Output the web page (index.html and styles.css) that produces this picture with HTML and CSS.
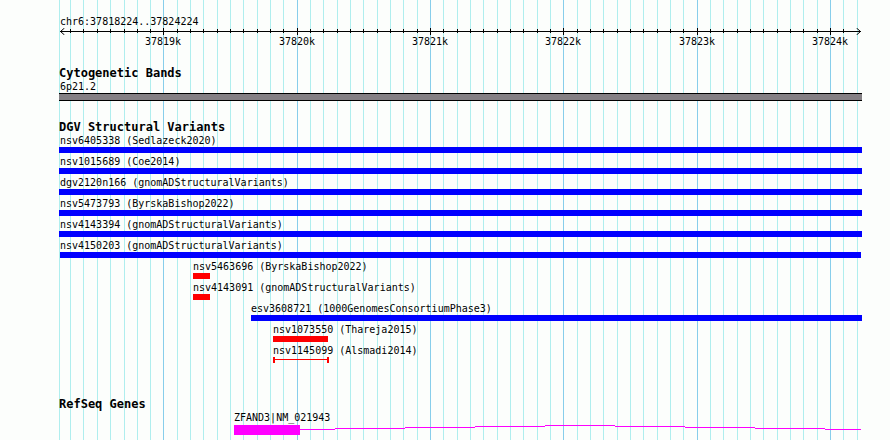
FILE: index.html
```html
<!DOCTYPE html>
<html lang="en">
<head>
<meta charset="utf-8">
<title>chr6:37818224..37824224</title>
<link rel="stylesheet" href="styles.css">
</head>
<body>
<main class="viewer">
  <div class="plot">
    <svg class="gridlines" viewBox="0 0 803 440" preserveAspectRatio="none" aria-hidden="true">
      <path class="grid-minor" d="M.5 0v440M11.5 0v440M24.5 0v440M38.5 0v440M51.5 0v440M65.5 0v440M78.5 0v440M91.5 0v440M118.5 0v440M131.5 0v440M144.5 0v440M158.5 0v440M171.5 0v440M184.5 0v440M198.5 0v440M211.5 0v440M224.5 0v440M251.5 0v440M264.5 0v440M278.5 0v440M291.5 0v440M304.5 0v440M318.5 0v440M331.5 0v440M344.5 0v440M358.5 0v440M384.5 0v440M398.5 0v440M411.5 0v440M424.5 0v440M438.5 0v440M451.5 0v440M464.5 0v440M478.5 0v440M491.5 0v440M518.5 0v440M531.5 0v440M544.5 0v440M558.5 0v440M571.5 0v440M584.5 0v440M598.5 0v440M611.5 0v440M624.5 0v440M651.5 0v440M664.5 0v440M678.5 0v440M691.5 0v440M704.5 0v440M718.5 0v440M731.5 0v440M744.5 0v440M758.5 0v440M784.5 0v440M798.5 0v440"/>
      <path class="grid-major" d="M104.5 0v440M238.5 0v440M371.5 0v440M504.5 0v440M638.5 0v440M771.5 0v440"/>
    </svg>

    <header class="scale">
      <h1 class="region">chr6:37818224..37824224</h1>
      <svg class="ruler" viewBox="0 0 803 7" preserveAspectRatio="none" aria-hidden="true">
        <path d="M1 3.500H802M5.500 0L1.500 3.500L5.500 7M797.500 0L801.500 3.500L797.500 7"/>
        <path d="M11.5 1v4M24.5 1v4M38.5 1v4M51.5 1v4M65.5 1v4M78.5 1v4M91.5 1v4M118.5 1v4M131.5 1v4M144.5 1v4M158.5 1v4M171.5 1v4M184.5 1v4M198.5 1v4M211.5 1v4M224.5 1v4M251.5 1v4M264.5 1v4M278.5 1v4M291.5 1v4M304.5 1v4M318.5 1v4M331.5 1v4M344.5 1v4M358.5 1v4M384.5 1v4M398.5 1v4M411.5 1v4M424.5 1v4M438.5 1v4M451.5 1v4M464.5 1v4M478.5 1v4M491.5 1v4M518.5 1v4M531.5 1v4M544.5 1v4M558.5 1v4M571.5 1v4M584.5 1v4M598.5 1v4M611.5 1v4M624.5 1v4M651.5 1v4M664.5 1v4M678.5 1v4M691.5 1v4M704.5 1v4M718.5 1v4M731.5 1v4M744.5 1v4M758.5 1v4M784.5 1v4"/>
        <path d="M104.5 0v7M238.5 0v7M371.5 0v7M504.5 0v7M638.5 0v7M771.5 0v7"/>
      </svg>
      <div class="ticks">
        <span class="tick" style="--start:104">37819k</span>
        <span class="tick" style="--start:238">37820k</span>
        <span class="tick" style="--start:371">37821k</span>
        <span class="tick" style="--start:504">37822k</span>
        <span class="tick" style="--start:638">37823k</span>
        <span class="tick" style="--start:771">37824k</span>
      </div>
    </header>

    <section class="track track-bands">
      <h2 class="track-title">Cytogenetic Bands</h2>
      <div class="feature spanning" style="--start:0;--span:803"><span class="label">6p21.2</span><div class="band"></div></div>
    </section>

    <section class="track track-variants">
      <h2 class="track-title">DGV Structural Variants</h2>
      <div class="feature spanning" style="--start:0;--span:803"><span class="label">nsv6405338 (Sedlazeck2020)</span><div class="bar gain"></div></div>
      <div class="feature spanning" style="--start:0;--span:803"><span class="label">nsv1015689 (Coe2014)</span><div class="bar gain"></div></div>
      <div class="feature spanning" style="--start:0;--span:803"><span class="label">dgv2120n166 (gnomADStructuralVariants)</span><div class="bar gain"></div></div>
      <div class="feature spanning" style="--start:0;--span:803"><span class="label">nsv5473793 (ByrskaBishop2022)</span><div class="bar gain"></div></div>
      <div class="feature spanning" style="--start:0;--span:803"><span class="label">nsv4143394 (gnomADStructuralVariants)</span><div class="bar gain"></div></div>
      <div class="feature" style="--start:1;--span:801"><span class="label">nsv4150203 (gnomADStructuralVariants)</span><div class="bar gain"></div></div>
      <div class="feature" style="--start:134;--span:17"><span class="label">nsv5463696 (ByrskaBishop2022)</span><div class="bar loss"></div></div>
      <div class="feature" style="--start:134;--span:17"><span class="label">nsv4143091 (gnomADStructuralVariants)</span><div class="bar loss"></div></div>
      <div class="feature" style="--start:192;--span:611"><span class="label">esv3608721 (1000GenomesConsortiumPhase3)</span><div class="bar gain"></div></div>
      <div class="feature" style="--start:214;--span:55"><span class="label">nsv1073550 (Thareja2015)</span><div class="bar loss"></div></div>
      <div class="feature" style="--start:214;--span:56"><span class="label">nsv1145099 (Alsmadi2014)</span><div class="bar range"></div></div>
    </section>

    <section class="track track-genes">
      <h2 class="track-title">RefSeq Genes</h2>
      <div class="feature" style="--start:175;--span:627">
        <span class="label">ZFAND3|NM_021943</span>
        <svg class="gene" viewBox="0 0 627 10" preserveAspectRatio="none" aria-hidden="true">
          <path d="M0 0h66v10H0zM66 4h35v1H66zM101 3h70v1h-70zM171 2h70v1h-70zM241 1h70v1h-70zM311 0h70v1h-70zM381 1h70v1h-70zM451 2h70v1h-70zM521 3h70v1h-70zM591 4h36v1h-36z"/>
        </svg>
      </div>
    </section>
  </div>
</main>
</body>
</html>
```
FILE: styles.css
```css
* {
  box-sizing: border-box;
}

body {
  margin: 0;
  background: #fcfefc;
  color: #000;
  font: 10px/13px "DejaVu Sans Mono", "Liberation Mono", monospace;
}

.viewer {
  min-height: 100vh;
  padding: 0 28px 0 59px;
  display: flex;
}

.plot {
  position: relative;
  flex: 1;
  min-width: 0;
  padding: 15px 0 4px;
}

.gridlines {
  position: absolute;
  inset: 0;
  z-index: -1;
  width: 100%;
  height: 100%;
}

.gridlines path,
.ruler path {
  fill: none;
  stroke-width: 1px;
  vector-effect: non-scaling-stroke;
}

.gridlines .grid-minor {
  stroke: #afeeee;
}

.gridlines .grid-major {
  stroke: #87ceeb;
}

.region {
  margin: 0;
  padding-left: 1px;
  font-size: 10px;
  font-weight: normal;
}

.ruler {
  display: block;
  width: 100%;
  height: 7px;
}

.ruler path {
  stroke: #000;
}

.ticks {
  position: relative;
  height: 13px;
}

.tick {
  position: absolute;
  left: calc(100% * var(--start) / 803);
  transform: translateX(-50%);
}

.track-title {
  margin: 0;
  font-size: 12px;
  line-height: 13px;
}

.track-bands {
  padding-top: 19px;
}

.track-variants {
  padding-top: 20px;
}

.track-genes {
  padding-top: 35px;
}

.feature {
  width: calc(100% * var(--span) / 803);
  margin-left: calc(100% * var(--start) / 803);
}

.feature + .feature {
  margin-top: 2px;
}

.label {
  display: block;
  white-space: nowrap;
}

.spanning .label {
  padding-left: 1px;
}

/* Room for the underscore in gene names above the exon box. */
.track-genes .label {
  padding-bottom: 1px;
}

.band {
  height: 8px;
  background: #848084;
  border: solid #000;
  border-width: 1px 0;
}

.bar {
  height: 6px;
}

.gain {
  background: #00f;
}

.loss {
  background: #f00;
}

.range {
  border: solid #f00;
  border-width: 0 2px;
  background: linear-gradient(#f00, #f00) 0 2px / 100% 1px no-repeat;
}

.gene {
  display: block;
  width: 100%;
  height: 10px;
  fill: #f0f;
  shape-rendering: crispEdges;
}
```
